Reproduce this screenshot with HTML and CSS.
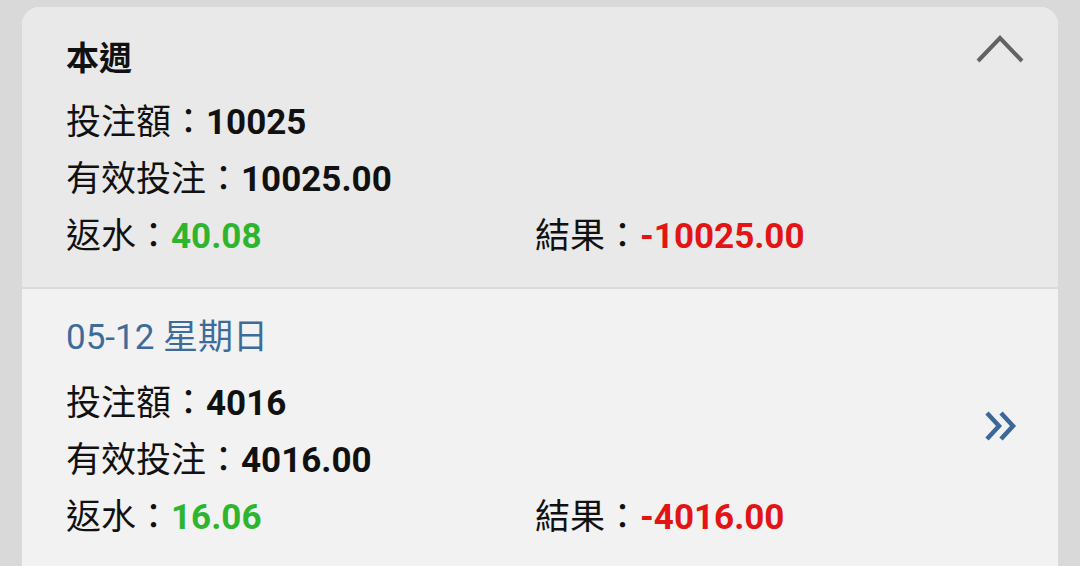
FILE: index.html
```html
<!DOCTYPE html>
<html lang="zh-Hant">
<head>
    <meta charset="UTF-8">
    <meta name="viewport" content="width=device-width, initial-scale=1.0">
    <title>投注記錄</title>
    <link rel="stylesheet" href="styles.css">
</head>
<body>
    <div class="card">
        <div class="week">
            <div class="week-head">
                <h2>本週</h2>
                <svg class="toggle" width="50" height="30" viewBox="0 0 50 30">
                    <polyline points="3,27 25,4 47,27" fill="none" stroke="#636363" stroke-width="4" stroke-linejoin="miter"/>
                </svg>
            </div>
            <div class="row">投注額：<b>10025</b></div>
            <div class="row">有效投注：<b>10025.00</b></div>
            <div class="row pair">
                <span>返水：<b class="green">40.08</b></span>
                <span>結果：<b class="red">-10025.00</b></span>
            </div>
        </div>

        <div class="day">
            <div class="day-body">
                <div class="date">05-12 星期日</div>
                <div class="row">投注額：<b>4016</b></div>
                <div class="row">有效投注：<b>4016.00</b></div>
                <div class="row pair">
                    <span>返水：<b class="green">16.06</b></span>
                    <span>結果：<b class="red">-4016.00</b></span>
                </div>
            </div>
            <svg class="more" width="34" height="32" viewBox="0 0 34 32">
                <polyline points="3,3 15,16 3,29" fill="none" stroke="#3b6896" stroke-width="4.5"/>
                <polyline points="17,3 29,16 17,29" fill="none" stroke="#3b6896" stroke-width="4.5"/>
            </svg>
        </div>
    </div>
</body>
</html>
```

FILE: styles.css
```css
body {
    margin: 0;
    background-color: #d9d9d9;
    font-family: Roboto, "Noto Sans CJK TC", sans-serif;
    color: #111;
    overflow: hidden;
}
.card {
    margin: 7px 22px 0 22px;
    padding-bottom: 40px;
    border-radius: 18px;
    overflow: hidden;
    background-color: #f2f2f2;
}
.week {
    background-color: #e9e9e9;
    padding: 20px 0 22px 44px;
    border-bottom: 2px solid #dadada;
}
.week-head {
    display: flex;
    justify-content: space-between;
    align-items: center;
    height: 57px;
    margin-bottom: 10px;
    padding-right: 33px;
}
.week-head h2 {
    margin: 0;
    font-size: 33px;
    font-weight: bold;
}
.toggle {
    margin-top: -14px;
}
.row {
    font-size: 35px;
    line-height: 57px;
    height: 57px;
    white-space: nowrap;
}
.row b {
    font-weight: bold;
}
.pair {
    display: grid;
    grid-template-columns: 469px 1fr;
}
.green {
    color: #2eb52e;
}
.red {
    color: #e21414;
}
.day {
    display: flex;
    align-items: center;
    padding: 20px 40px 22px 44px;
}
.day-body {
    flex: 1;
}
.date {
    font-size: 35px;
    line-height: 57px;
    height: 57px;
    margin-bottom: 9px;
    color: #3d6c9b;
}
.more {
    margin-top: -4px;
}
```
